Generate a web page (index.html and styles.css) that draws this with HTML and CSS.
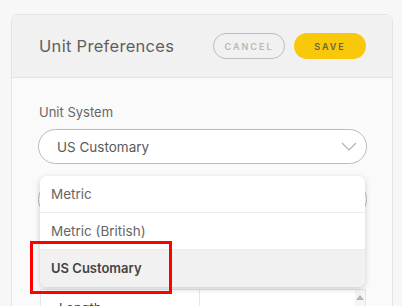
FILE: index.html
```html
<!DOCTYPE html>
<html lang="en">
<head>
    <meta charset="UTF-8">
    <meta name="viewport" content="width=device-width, initial-scale=1.0">
    <title>Unit Preferences</title>
    <link rel="stylesheet" href="styles.css">
</head>
<body>
    <div class="card">
        <div class="card-header">
            <h2 class="title">Unit Preferences</h2>
            <div class="actions">
                <button type="button" class="btn btn-cancel">Cancel</button>
                <button type="button" class="btn btn-save">Save</button>
            </div>
        </div>

        <div class="card-body">
            <label class="field-label">Unit System</label>
            <div class="field">
                <div class="select">
                    <span>US Customary</span>
                    <svg class="chevron" width="16" height="9" viewBox="0 0 16 9">
                        <polyline points="1,1 8,8 15,1" fill="none" stroke="#a9b2c0" stroke-width="1.2"/>
                    </svg>
                </div>

                <ul class="dropdown">
                    <li>Metric</li>
                    <li>Metric (British)</li>
                    <li class="selected">US Customary</li>
                </ul>
            </div>

            <div class="select select-behind"></div>

            <div class="units-table">
                <div class="cell">Length</div>
                <div class="cell"></div>
                <div class="scroll"><span class="arrow"></span></div>
            </div>
        </div>
    </div>

    <!-- annotation box -->
    <div class="highlight"></div>
</body>
</html>
```

FILE: styles.css
```css
/* General styles */
body {
    margin: 0;
    padding: 14px 9px 0 11px;
    background-color: #f7f7f7;
    font-family: Inter, "Open Sans", sans-serif;
    color: #555;
    height: 306px;
    overflow: hidden;
    box-sizing: border-box;
}

/* Card */
.card {
    border: 1px solid #e4e4e4;
    border-radius: 7px;
    background-color: #fafafa;
    height: 400px;
}

.card-header {
    display: flex;
    align-items: center;
    justify-content: space-between;
    height: 62px;
    padding: 0 26px 0 27px;
    background-color: #f1f1f1;
    border-bottom: 1px solid #e2e2e2;
    border-radius: 7px 7px 0 0;
}

.title {
    margin: 0;
    font-size: 16.5px;
    font-weight: 400;
    color: #606060;
    letter-spacing: 0.3px;
}

.actions {
    display: flex;
    gap: 9px;
}

.btn {
    width: 72px;
    height: 26px;
    border-radius: 13px;
    font-family: inherit;
    font-size: 9px;
    font-weight: 600;
    letter-spacing: 2px;
    text-transform: uppercase;
    cursor: pointer;
}

.btn-cancel {
    background: transparent;
    border: 1px solid #bdbdbd;
    color: #b8b8b8;
}

.btn-save {
    background-color: #f9c80a;
    border: none;
    color: #6a6146;
}

/* Form body */
.card-body {
    padding: 26px 25px 0 26px;
}

.field-label {
    display: block;
    font-size: 13px;
    line-height: 16px;
    color: #666;
    margin-bottom: 9px;
    padding-left: 1px;
}

.field {
    position: relative;
}

.select {
    display: flex;
    align-items: center;
    justify-content: space-between;
    height: 35px;
    box-sizing: border-box;
    padding: 0 9px 0 18px;
    background-color: #fff;
    border: 1px solid #bbb;
    border-radius: 18px;
    font-size: 13.5px;
    color: #5a5a5a;
}

.select-behind {
    margin-top: 18px;
}

/* Open dropdown list */
.dropdown {
    position: absolute;
    top: calc(100% + 12px);
    left: 2px;
    right: 2px;
    margin: 0;
    padding: 0;
    list-style: none;
    background-color: #fff;
    border-radius: 7px;
    box-shadow: 0 2px 6px rgba(0, 0, 0, 0.18);
    overflow: hidden;
    z-index: 2;
}

.dropdown li {
    height: 36px;
    line-height: 36px;
    padding-left: 11px;
    font-size: 13.5px;
    color: #666;
    border-bottom: 1px solid #ececec;
}

.dropdown li:last-child {
    border-bottom: none;
    height: 37px;
    line-height: 37px;
}

.dropdown .selected {
    background-color: #f1f1f1;
    font-weight: 600;
    font-size: 13px;
    color: #444;
}

/* Table under the dropdown */
.units-table {
    display: grid;
    grid-template-columns: 158px 1fr 10px;
    margin: 72px 1px 0 2px;
    height: 40px;
    background-color: #fff;
    border: 1px solid #e6e6e6;
}

.cell {
    padding: 10px 0 0 18px;
    font-size: 13px;
    color: #444;
}

.cell + .cell {
    border-left: 1px solid #e6e6e6;
}

.scroll {
    background-color: #f5f5f5;
    display: flex;
    justify-content: center;
    padding-top: 5px;
}

.arrow {
    width: 0;
    height: 0;
    border-left: 4px solid transparent;
    border-right: 4px solid transparent;
    border-bottom: 5px solid #b5b5b5;
}

/* Red annotation */
.highlight {
    position: absolute;
    left: 30px;
    top: 241px;
    width: 142px;
    height: 53px;
    box-sizing: border-box;
    border: 3px solid #ff0000;
    z-index: 5;
}
```
